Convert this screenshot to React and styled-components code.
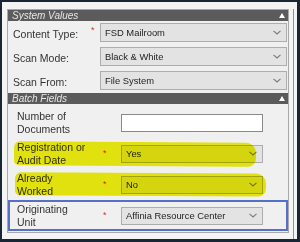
import React from "react";
import styled, { createGlobalStyle } from "styled-components";

const Global = createGlobalStyle`
  html, body { margin: 0; padding: 0; background: #1a2633; }
  body { font-family: "Liberation Sans", Arial, sans-serif; }
`;

const Frame = styled.div`
  width: 300px;
  height: 242px;
  box-sizing: border-box;
  padding: 2px 3px 3px 2px;
  background: #1a2633;
`;

const Window = styled.div`
  height: 100%;
  box-sizing: border-box;
  background: #f4f4f4;
  display: flex;
  padding: 7px 0 0 5px;
`;

const Panel = styled.div`
  width: 282px;
  align-self: flex-start;
  box-sizing: border-box;
  border: 1px solid #a9a9a9;
  background: #f0f0f0;
  padding-bottom: 1px;
`;

const ScrollEdge = styled.div`
  margin-left: 4px;
  width: 3px;
  border-left: 1px solid #8493a6;
`;

const Header = styled.div`
  height: 11px;
  background: #5b5b5b;
  color: #e6e6e6;
  font-style: italic;
  font-size: 10px;
  line-height: 11px;
  padding: 0 3px 0 4px;
  display: flex;
  align-items: center;
  justify-content: space-between;
`;

const Collapse = styled.span`
  width: 0;
  height: 0;
  border-left: 3.5px solid transparent;
  border-right: 3.5px solid transparent;
  border-bottom: 5px solid #ffffff;
  margin-top: -1px;
`;

const TopSection = styled.div`
  display: flex;
  flex-direction: column;
  gap: 5px;
  padding: 2px 0 3px 0;
`;

const TopRow = styled.div`
  display: grid;
  grid-template-columns: 78px 9px 187px;
  padding-left: 5px;
  height: 19px;
  align-items: center;
`;

const TopLabel = styled.div`
  font-size: 10.5px;
  color: #333;
  padding-top: 3px;
`;

const Star = styled.span`
  color: #e0282c;
  font-size: 9px;
  line-height: 9px;
  align-self: ${(p) => (p.$top ? "start" : "center")};
  margin-top: ${(p) => (p.$top ? "3px" : "0")};
`;

const Combo = styled.div`
  height: ${(p) => p.$h}px;
  box-sizing: border-box;
  border: 1px solid #adadad;
  background: #e3e3e3;
  display: flex;
  align-items: center;
  justify-content: space-between;
  padding: 0 5px 0 4px;
  font-size: 9.4px;
  color: #1e1e1e;
`;

const TextBox = styled.div`
  height: 18px;
  box-sizing: border-box;
  border: 1px solid #8a8a8a;
  background: #ffffff;
`;

const BatchSection = styled.div`
  display: flex;
  flex-direction: column;
  padding-top: 3px;
`;

const BatchRow = styled.div`
  position: relative;
  display: grid;
  grid-template-columns: 86px 18px 142px;
  align-items: center;
  height: 31px;
  box-sizing: border-box;
  padding-left: ${(p) => (p.$focused ? 7 : 9)}px;
  border: ${(p) => (p.$focused ? "2px solid #5670c8" : "none")};
`;

const BatchLabel = styled.div`
  font-size: 10.5px;
  line-height: 13px;
  color: #333;
`;

const Highlight = styled.span`
  position: absolute;
  pointer-events: none;
  background: #f0f010;
  mix-blend-mode: multiply;
  border-radius: 6px 10px 8px 5px;
  transform: rotate(${(p) => p.$rot}deg);
`;

const Chevron = () => (
  <svg width="8" height="5" viewBox="0 0 8 5">
    <path d="M0.5 0.8 L4 4 L7.5 0.8" fill="none" stroke="#7a7a7a" strokeWidth="1.1" />
  </svg>
);

const topFields = [
  { label: "Content Type:", value: "FSD Mailroom", req: true },
  { label: "Scan Mode:", value: "Black & White" },
  { label: "Scan From:", value: "File System" },
];

export default function App() {
  return (
    <>
      <Global />
      <Frame>
        <Window>
          <Panel>
            <Header>
              <span>System Values</span>
              <Collapse />
            </Header>
            <TopSection>
              {topFields.map((f) => (
                <TopRow key={f.label}>
                  <TopLabel>{f.label}</TopLabel>
                  {f.req ? <Star $top>*</Star> : <span />}
                  <Combo $h={19}>
                    <span>{f.value}</span>
                    <Chevron />
                  </Combo>
                </TopRow>
              ))}
            </TopSection>
            <Header>
              <span>Batch Fields</span>
              <Collapse />
            </Header>
            <BatchSection>
              <BatchRow>
                <BatchLabel>
                  Number of
                  <br />
                  Documents
                </BatchLabel>
                <span />
                <TextBox />
              </BatchRow>
              <BatchRow>
                <BatchLabel>
                  Registration or
                  <br />
                  Audit Date
                </BatchLabel>
                <Star>*</Star>
                <Combo $h={18}>
                  <span>Yes</span>
                  <Chevron />
                </Combo>
                <Highlight
                  $rot={0.4}
                  style={{ left: 6, top: 4, width: 242, height: 24 }}
                />
              </BatchRow>
              <BatchRow>
                <BatchLabel>
                  Already
                  <br />
                  Worked
                </BatchLabel>
                <Star>*</Star>
                <Combo $h={18}>
                  <span>No</span>
                  <Chevron />
                </Combo>
                <Highlight
                  $rot={0.3}
                  style={{ left: 7, top: 4, width: 251, height: 23 }}
                />
              </BatchRow>
              <BatchRow $focused>
                <BatchLabel>
                  Originating
                  <br />
                  Unit
                </BatchLabel>
                <Star>*</Star>
                <Combo $h={18}>
                  <span>Affinia Resource Center</span>
                  <Chevron />
                </Combo>
              </BatchRow>
            </BatchSection>
          </Panel>
          <ScrollEdge />
        </Window>
      </Frame>
    </>
  );
}
